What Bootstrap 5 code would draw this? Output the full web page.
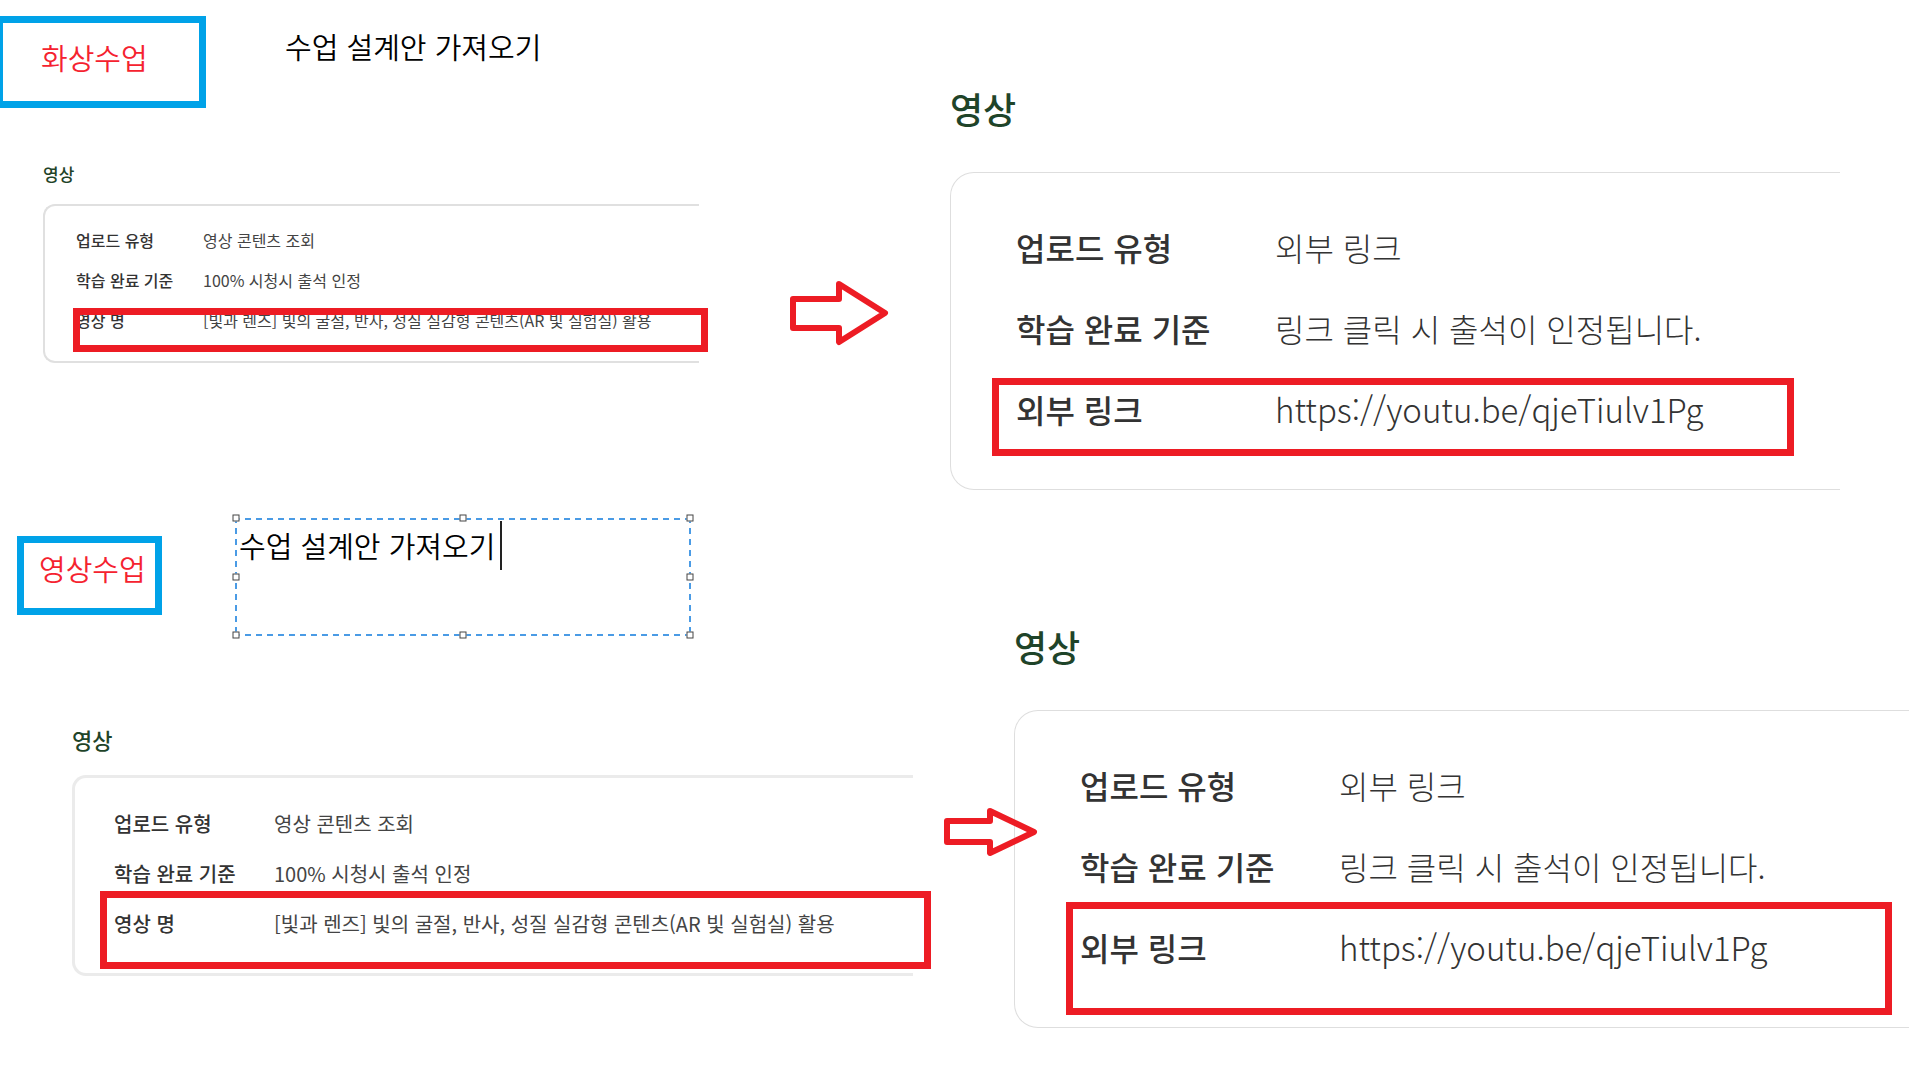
<!DOCTYPE html>
<html lang="ko">
<head>
<meta charset="utf-8">
<meta name="viewport" content="width=device-width, initial-scale=1">
<title>수업 설계안 가져오기</title>
<link href="https://cdn.jsdelivr.net/npm/bootstrap@5.3.0/dist/css/bootstrap.min.css" rel="stylesheet">
<style>
body { font-family: "Noto Sans CJK KR", "Noto Sans", sans-serif; background: #fff; color: #333; overflow-x: hidden; }
.board { display: grid; grid-template-columns: 950fr 959fr; min-height: 100vh; overflow: hidden; }
.lesson-tag { border: 7px solid #00a2e8; color: #f5222f; font-size: 29px; line-height: 44px; font-weight: 350; flex: none; }
.tag-live { width: 210px; height: 92px; margin: 16px 0 0 -4px; padding: 12px 0 0 38px; }
.tag-video { width: 145px; height: 79px; margin: 19px 0 0 17px; padding: 3px 0 0 15px; }
.lesson-video { margin-top: 154px; }
.note { font-size: 29px; line-height: 44px; font-weight: 350; color: #000; }
.note-live { margin: 24px 0 0 79px; }
.text-frame { width: 458px; height: 120px; margin-left: 72px; padding: 6px 5px;
  background:
    repeating-linear-gradient(90deg, #4a9be5 0 6px, transparent 6px 11px) 0 1px / 100% 2px no-repeat,
    repeating-linear-gradient(90deg, #4a9be5 0 6px, transparent 6px 11px) 0 calc(100% - 1px) / 100% 2px no-repeat,
    repeating-linear-gradient(180deg, #4a9be5 0 6px, transparent 6px 11px) 1px 0 / 2px 100% no-repeat,
    repeating-linear-gradient(180deg, #4a9be5 0 6px, transparent 6px 11px) calc(100% - 1px) 0 / 2px 100% no-repeat; }
.text-frame textarea { resize: none; outline: 0; overflow: hidden; height: 100px; }
.text-caret { position: absolute; left: 266px; top: 4px; width: 2px; height: 49px; background: #222; }
.grip { position: absolute; width: 7px; height: 7px; border: 1px solid #444; background: #fff; transform: translate(-50%, -50%); }
.x0 { left: 2px; } .x1 { left: 50%; } .x2 { left: calc(100% - 2px); }
.y0 { top: 1px; } .y1 { top: 50%; } .y2 { top: calc(100% - 2px); }

.panel-title { color: #1f4429; font-weight: 500; margin: 0; }
.info { border: 1px solid #dedede; border-right: 0; }
.info dt { font-weight: 500; flex: none; }
.info dd { font-weight: 300; margin: 0; white-space: nowrap; }
.info a { color: inherit; text-decoration: none; font-size: 33px; }
.hit { position: absolute; border: 7px solid #ed1c24; pointer-events: none; }
.arrow-shape { position: absolute; fill: none; stroke: #ed1c24; stroke-width: 6; stroke-linejoin: round; }

.panel-sm { margin: 53px 251px 0 43px; }
.panel-sm .panel-title { font-size: 17px; line-height: 26px; margin-bottom: 17px; }
.panel-sm .info { border-width: 2px; border-color: #e0e0e0; border-radius: 12px 0 0 12px; padding: 14px 0 21px 31px; font-size: 16px; line-height: 40px; }
.panel-sm dt { width: 127px; }
.panel-sm dd, .panel-md dd { font-weight: 400; color: #444; }
.panel-sm .hit { left: 28px; right: -9px; top: 102px; height: 44px; }
.arrow-a { right: 60px; top: 279px; }

.panel-md { margin: 86px 37px 0 72px; }
.panel-md .panel-title { font-size: 22px; line-height: 32px; margin-bottom: 20px; }
.panel-md .info { border-width: 3px; border-color: #ebebeb; border-radius: 14px 0 0 14px; padding: 21px 0 24px 39px; font-size: 20px; line-height: 50px; }
.panel-md dt { width: 160px; }
.panel-md .hit { left: 25px; right: -18px; top: 113px; height: 78px; }
.arrow-b { right: -89px; top: 806px; z-index: 2; }

.panel-lg .panel-title { font-size: 36px; line-height: 54px; margin-bottom: 37px; }
.panel-lg .info { border-radius: 24px 0 0 24px; padding: 34px 0 39px 65px; font-size: 32px; line-height: 81px; }
.panel-lg dt { width: 259px; }
.panel-live { margin: 81px 69px 0 0; }
.panel-live .hit { left: 41px; right: 46px; top: 205px; height: 78px; }
.panel-video { margin: 129px 0 0 64px; }
.panel-video .hit { left: 51px; right: 17px; top: 191px; height: 113px; }
</style>
<script src="https://cdn.jsdelivr.net/npm/bootstrap@5.3.0/dist/js/bootstrap.bundle.min.js"></script>
</head>
<body>
<main class="board">
  <div class="position-relative d-flex flex-column">
    <header class="d-flex align-items-start">
      <div class="lesson-tag tag-live">화상수업</div>
      <p class="note note-live mb-0">수업 설계안 가져오기</p>
    </header>
    <section class="panel-sm">
      <h2 class="panel-title">영상</h2>
      <dl class="info position-relative mb-0">
        <div class="d-flex"><dt>업로드 유형</dt><dd>영상 콘텐츠 조회</dd></div>
        <div class="d-flex"><dt>학습 완료 기준</dt><dd>100% 시청시 출석 인정</dd></div>
        <div class="d-flex"><dt>영상 명</dt><dd>[빛과 렌즈] 빛의 굴절, 반사, 성질 실감형 콘텐츠(AR 빛 실험실) 활용</dd></div>
        <div class="hit"></div>
      </dl>
    </section>
    <svg class="arrow-shape arrow-a" width="101" height="68" viewBox="0 0 101 68" aria-hidden="true"><path d="M4 20H50V5L96 34L50 63V49H4Z"/></svg>

    <header class="lesson-video d-flex align-items-start">
      <div class="lesson-tag tag-video">영상수업</div>
      <div class="text-frame position-relative">
        <textarea class="note d-block w-100 border-0 bg-transparent p-0" aria-label="메모" spellcheck="false">수업 설계안 가져오기</textarea>
        <span class="text-caret"></span>
        <span class="grip x0 y0"></span><span class="grip x1 y0"></span><span class="grip x2 y0"></span>
        <span class="grip x0 y1"></span><span class="grip x2 y1"></span>
        <span class="grip x0 y2"></span><span class="grip x1 y2"></span><span class="grip x2 y2"></span>
      </div>
    </header>
    <section class="panel-md">
      <h2 class="panel-title">영상</h2>
      <dl class="info position-relative mb-0">
        <div class="d-flex"><dt>업로드 유형</dt><dd>영상 콘텐츠 조회</dd></div>
        <div class="d-flex"><dt>학습 완료 기준</dt><dd>100% 시청시 출석 인정</dd></div>
        <div class="d-flex"><dt>영상 명</dt><dd>[빛과 렌즈] 빛의 굴절, 반사, 성질 실감형 콘텐츠(AR 빛 실험실) 활용</dd></div>
        <div class="hit"></div>
      </dl>
    </section>
    <svg class="arrow-shape arrow-b" width="96" height="52" viewBox="0 0 96 52" aria-hidden="true"><path d="M4 15H47V5L91 26L47 47V36H4Z"/></svg>
  </div>

  <div class="d-flex flex-column">
    <section class="panel-lg panel-live">
      <h2 class="panel-title">영상</h2>
      <dl class="info position-relative mb-0">
        <div class="d-flex"><dt>업로드 유형</dt><dd>외부 링크</dd></div>
        <div class="d-flex"><dt>학습 완료 기준</dt><dd>링크 클릭 시 출석이 인정됩니다.</dd></div>
        <div class="d-flex"><dt>외부 링크</dt><dd><a href="https://youtu.be/qjeTiulv1Pg">https://youtu.be/qjeTiulv1Pg</a></dd></div>
        <div class="hit"></div>
      </dl>
    </section>
    <section class="panel-lg panel-video">
      <h2 class="panel-title">영상</h2>
      <dl class="info position-relative mb-0">
        <div class="d-flex"><dt>업로드 유형</dt><dd>외부 링크</dd></div>
        <div class="d-flex"><dt>학습 완료 기준</dt><dd>링크 클릭 시 출석이 인정됩니다.</dd></div>
        <div class="d-flex"><dt>외부 링크</dt><dd><a href="https://youtu.be/qjeTiulv1Pg">https://youtu.be/qjeTiulv1Pg</a></dd></div>
        <div class="hit"></div>
      </dl>
    </section>
  </div>
</main>
</body>
</html>
